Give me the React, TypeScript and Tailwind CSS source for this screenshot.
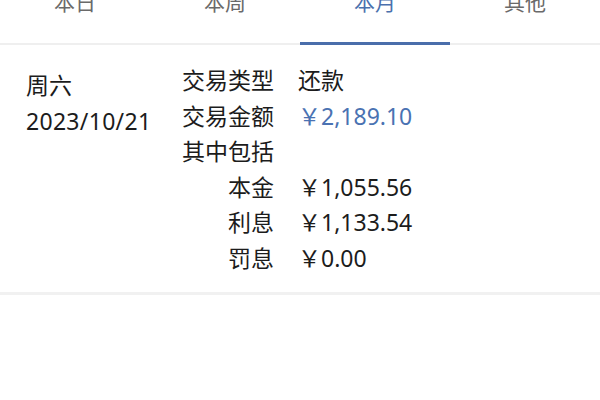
import React from 'react';

const tabs = ['本日', '本周', '本月', '其他'];

const subRows = [
  { label: '本金', value: '￥1,055.56' },
  { label: '利息', value: '￥1,133.54' },
  { label: '罚息', value: '￥0.00' },
];

export default function App() {
  return (
    <div className="w-[600px] h-[400px] overflow-hidden bg-white text-[#1c1c1c] font-['Noto_Sans','Noto_Sans_CJK_SC',sans-serif]">
      {/* tab bar, scrolled slightly up */}
      <div className="flex h-[45px] border-b-2 border-[#efefef]">
        {tabs.map((t, i) => (
          <div key={t} className="relative flex-1 flex justify-center">
            <span
              className={
                '-mt-[9px] h-[23px] text-[21px] leading-[23px] ' +
                (i === 2 ? 'text-[#4a70ad]' : 'text-[#6a6a6a]')
              }
            >
              {t}
            </span>
            {i === 2 && <div className="absolute left-0 right-0 -bottom-[2px] h-[3px] bg-[#4a6eab]" />}
          </div>
        ))}
      </div>

      {/* transaction item */}
      <div className="flex pt-[18px] pb-[15px] border-b-[3px] border-[#f1f1f1] text-[23px] leading-[35.6px]">
        <div className="w-[182px] pl-[26px] pt-[5px] flex flex-col">
          <span>周六</span>
          <span className="tracking-[0.3px]">2023/10/21</span>
        </div>
        <div className="grid grid-cols-[auto_1fr] gap-x-[24px]">
          <span>交易类型</span>
          <span>还款</span>
          <span>交易金额</span>
          <span className="text-[#4a72b2]">￥2,189.10</span>
          <span className="col-span-2">其中包括</span>
          {subRows.map((r) => (
            <React.Fragment key={r.label}>
              <span className="text-right">{r.label}</span>
              <span>{r.value}</span>
            </React.Fragment>
          ))}
        </div>
      </div>
    </div>
  );
}
